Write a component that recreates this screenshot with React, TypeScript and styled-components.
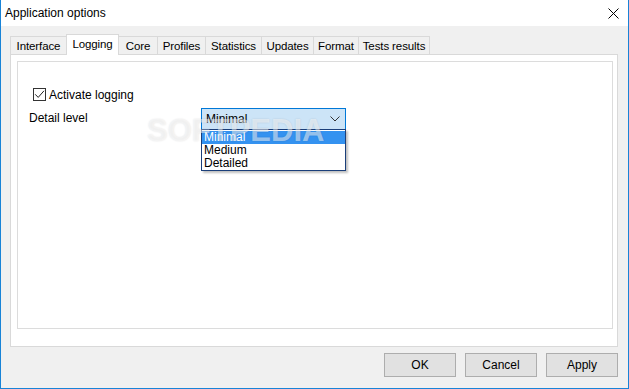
import React from 'react'
import styled, { createGlobalStyle } from 'styled-components'

const GlobalStyle = createGlobalStyle`
    html, body {
        margin: 0;
        padding: 0;
        background: #ffffff;
    }
    * {
        box-sizing: border-box;
    }
`;

const Window = styled.div`
    width: 629px;
    height: 389px;
    display: flex;
    flex-direction: column;
    border: 1px solid #1883d7;
    border-top: none;
    font-family: "Liberation Sans", Arial, sans-serif;
    font-size: 12px;
    color: #000;
    position: relative;
    overflow: hidden;
`;

const TitleBar = styled.div`
    height: 26px;
    flex: none;
    display: flex;
    align-items: center;
    justify-content: space-between;
    background: #ffffff;
    padding: 0 9px 0 4px;
`;

const Title = styled.span`
    font-size: 12px;
`;

const CloseIcon = styled.svg`
    width: 11px;
    height: 11px;
    margin-top: 1px;
`;

const Body = styled.div`
    flex: 1;
    display: flex;
    flex-direction: column;
    background: #f0f0f0;
    padding: 8px 10px 11px 9px;
`;

const TabStrip = styled.div`
    display: flex;
    align-items: flex-end;
    height: 21px;
    margin-bottom: -1px;
    position: relative;
    z-index: 1;
`;

const Tab = styled.div<{ $active?: boolean; $w: number }>`
    width: ${p => p.$w}px;
    height: ${p => (p.$active ? '21px' : '19px')};
    display: flex;
    align-items: center;
    justify-content: center;
    white-space: nowrap;
    font-size: 11.5px;
    letter-spacing: -0.1px;
    padding-bottom: ${p => (p.$active ? '3px' : '0')};
    background: ${p => (p.$active ? '#ffffff' : '#f0f0f0')};
    border: 1px solid #d9d9d9;
    border-bottom: ${p => (p.$active ? 'none' : '1px solid #d9d9d9')};
    margin-left: -1px;
    &:first-child {
        margin-left: 0;
    }
`;

const Panel = styled.div`
    flex: 1;
    background: #ffffff;
    border: 1px solid #d9d9d9;
    padding: 6px 4px 17px 6px;
    display: flex;
`;

const Page = styled.div`
    flex: 1;
    border: 1px solid #dcdcdc;
    padding: 26px 0 0 11px;
    display: flex;
    flex-direction: column;
    gap: 7px;
`;

const CheckRow = styled.label`
    display: flex;
    align-items: center;
    gap: 3px;
    margin-left: 4px;
    height: 13px;
`;

const CheckBox = styled.span`
    width: 13px;
    height: 13px;
    border: 1px solid #333333;
    background: #ffffff;
    display: flex;
    align-items: center;
    justify-content: center;
`;

const FieldRow = styled.div`
    display: flex;
    align-items: center;
`;

const FieldLabel = styled.span`
    width: 172px;
    margin-top: -2px;
`;

const ComboWrap = styled.div`
    position: relative;
`;

const Combo = styled.div`
    width: 145px;
    height: 22px;
    border: 1px solid #0078d7;
    background: #cce4f7;
    display: flex;
    align-items: center;
    justify-content: space-between;
    padding: 0 5px 0 4px;
`;

const DropList = styled.div`
    position: absolute;
    left: 0;
    top: 21px;
    width: 145px;
    background: #ffffff;
    border: 1px solid #1b3f7a;
    box-shadow: 2px 2px 2px rgba(0, 0, 0, 0.25);
    padding: 1px 0 0;
    z-index: 3;
`;

const DropItem = styled.div<{ $selected?: boolean }>`
    height: 13px;
    line-height: 13px;
    padding-left: 2px;
    background: ${p => (p.$selected ? '#3492f0' : 'transparent')};
    color: ${p => (p.$selected ? '#ffffff' : '#000000')};
`;

const Watermark = styled.div`
    position: absolute;
    left: 146px;
    top: 115px;
    font-family: "Liberation Sans", Arial, sans-serif;
    font-weight: bold;
    font-size: 31px;
    line-height: 31px;
    color: rgba(255, 255, 255, 0.5);
    text-shadow: 0 0 2px rgba(0, 0, 0, 0.12);
    pointer-events: none;
    z-index: 4;
`;

const ButtonBar = styled.div`
    display: flex;
    justify-content: flex-end;
    gap: 9px;
    margin-top: 6px;
`;

const Button = styled.button`
    width: 72px;
    height: 24px;
    background: #e1e1e1;
    border: 1px solid #adadad;
    font-family: "Liberation Sans", Arial, sans-serif;
    font-size: 12px;
    color: #000;
    padding: 0;
`;

const tabs: [string, number][] = [
    ['Interface', 57],
    ['Logging', 53],
    ['Core', 40],
    ['Profiles', 49],
    ['Statistics', 57],
    ['Updates', 53],
    ['Format', 46],
    ['Tests results', 72],
]
const levels = ['Minimal', 'Medium', 'Detailed']

export default function App() {
    return (
        <>
            <GlobalStyle />
            <Window>
                <TitleBar>
                    <Title>Application options</Title>
                    <CloseIcon viewBox="0 0 11 11">
                        <path d="M0.5 0.5 L10.5 10.5 M10.5 0.5 L0.5 10.5" stroke="#000" strokeWidth="1" fill="none" />
                    </CloseIcon>
                </TitleBar>
                <Body>
                    <TabStrip>
                        {tabs.map(([t, w]) => (
                            <Tab key={t} $w={w} $active={t === 'Logging'}>{t}</Tab>
                        ))}
                    </TabStrip>
                    <Panel>
                        <Page>
                            <CheckRow>
                                <CheckBox>
                                    <svg width="11" height="11" viewBox="0 0 11 11">
                                        <path d="M1.2 5.3 L4.2 8.4 L10 1.8" stroke="#222" strokeWidth="1" fill="none" />
                                    </svg>
                                </CheckBox>
                                Activate logging
                            </CheckRow>
                            <FieldRow>
                                <FieldLabel>Detail level</FieldLabel>
                                <ComboWrap>
                                    <Combo>
                                        <span>Minimal</span>
                                        <svg width="10" height="6" viewBox="0 0 10 6">
                                            <path d="M0.5 0.5 L5 5 L9.5 0.5" stroke="#333" strokeWidth="1" fill="none" />
                                        </svg>
                                    </Combo>
                                    <DropList>
                                        {levels.map(l => (
                                            <DropItem key={l} $selected={l === 'Minimal'}>{l}</DropItem>
                                        ))}
                                    </DropList>
                                </ComboWrap>
                            </FieldRow>
                        </Page>
                    </Panel>
                    <ButtonBar>
                        <Button>OK</Button>
                        <Button>Cancel</Button>
                        <Button>Apply</Button>
                    </ButtonBar>
                </Body>
                <Watermark>SOFTPEDIA</Watermark>
            </Window>
        </>
    )
}
